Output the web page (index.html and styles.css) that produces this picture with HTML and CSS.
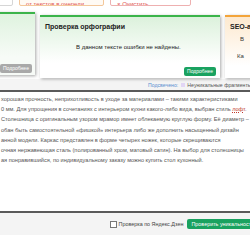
FILE: index.html
```html
<!DOCTYPE html>
<html lang="ru">
<head>
  <meta charset="UTF-8">
  <meta name="viewport" content="width=device-width, initial-scale=1.0">
  <title>Проверка уникальности</title>
  <link rel="stylesheet" href="styles.css">
</head>
<body>
  <div class="page">
    <div class="top-buttons">
      <div class="top-btn top-btn-plain"></div>
      <div class="top-btn top-btn-queue">от текстов в очереди</div>
      <div class="top-btn top-btn-clear">× Очистить</div>
    </div>

    <div class="cards">
      <div class="card card-side">
        <div class="card-body"></div>
        <div class="card-foot"><span class="btn-more btn-grey">Подробнее</span></div>
      </div>
      <div class="card card-main">
        <div class="card-title">Проверка орфографии</div>
        <div class="card-body card-center">В данном тексте ошибки не найдены.</div>
        <div class="card-foot card-foot-right"><span class="btn-more btn-green">Подробнее</span></div>
      </div>
      <div class="card card-seo">
        <div class="card-title">SEO-анализ</div>
        <div class="card-line">В</div>
        <div class="card-line card-line-low">Ка</div>
      </div>
    </div>

    <div class="legend">
      <span class="legend-label">Подсвечено:</span>
      <span class="legend-mark"></span>
      <span>Неуникальные фрагменты</span>
    </div>

    <div class="text-area">
      <p>хорошая прочность, неприхотливость в уходе за материалами – такими характеристиками</p>
      <p>0 мм. Для упрощения в сочетаниях с интерьером кухни какого-либо вида, выбран стиль <span class="typo">лофт</span>.</p>
      <p>Столешница с оригинальным узором мрамор имеет облекаемую круглую форму. Её диаметр –</p>
      <p>обан быть самостоятельной «фишкой» интерьера либо же дополнить насыщенный дизайн</p>
      <p>анной модели. Каркас представлен в форме четырех ножек, которые скрещиваются</p>
      <p>очная нержавеющая сталь (полированный хром, матовый сатин). На выбор для столешницы</p>
      <p>ая понравившийся, по индивидуальному заказу можно купить стол кухонный.</p>
    </div>

    <div class="bottom-bar">
      <label class="check"><span class="check-box"></span>Проверка по Яндекс.Дзен</label>
      <span class="btn-check">Проверить уникальность</span>
    </div>
  </div>
</body>
</html>
```

FILE: styles.css
```css
body, html {
  margin: 0;
  padding: 0;
  width: 100%;
  height: 100%;
  overflow: hidden;
  background: #fff;
  font-family: 'Liberation Sans', Arial, sans-serif;
}

.page {
  width: 250px;
  overflow: hidden;
}

/* верхние кнопки */
.top-buttons {
  display: flex;
  gap: 6px;
  margin-top: -10px;
  height: 16px;
}

.top-btn {
  box-sizing: border-box;
  height: 16px;
  border-radius: 2px;
  font-size: 6px;
  line-height: 26px;
  color: #e0524f;
  white-space: nowrap;
  overflow: hidden;
  padding: 0 6px;
  flex-shrink: 0;
}

.top-btn-plain {
  width: 17px;
  margin-left: -4px;
  border: 1px solid #d6d6d6;
}

.top-btn-queue {
  width: 85px;
  border: 1px solid #f3c79a;
  background: #fffaf4;
}

.top-btn-clear {
  width: 81px;
  border: 1px solid #eeb0b0;
}

/* карточки */
.cards {
  display: flex;
  align-items: flex-start;
  gap: 5px;
  margin-top: 6px;
}

.card {
  box-sizing: border-box;
  display: flex;
  flex-direction: column;
  flex-shrink: 0;
  border-top: 2px solid #3bb44a;
  box-shadow: 1px 1px 3px rgba(0, 0, 0, 0.35);
}

.card-side {
  width: 40px;
  height: 63px;
  margin-left: -5px;
  background: linear-gradient(#dff3df, #f7fbf7 70%);
}

.card-main {
  width: 180px;
  height: 63px;
  margin-top: 3px;
  background: linear-gradient(#dcf1dc, #fff 75%);
}

.card-seo {
  width: 40px;
  height: 63px;
  margin-top: 3px;
  border-top-color: #f3a43a;
  background: linear-gradient(#fde9cf, #fff 80%);
}

.card-title {
  font-weight: bold;
  font-size: 7px;
  color: #222;
  padding: 6px 0 0 5px;
  white-space: nowrap;
}

.card-body {
  flex: 1;
}

.card-center {
  font-size: 6px;
  color: #222;
  padding-top: 14px;
  padding-left: 36px;
  white-space: nowrap;
}

.card-foot {
  display: flex;
  padding: 0 4px 2px 5px;
}

.card-foot-right {
  justify-content: flex-end;
}

.btn-more {
  font-size: 5px;
  line-height: 9px;
  padding: 0 3px;
  border-radius: 2px;
  color: #fff;
}

.btn-grey {
  background: #a9a9a9;
}

.btn-green {
  background: #1aa260;
}

.card-line {
  font-size: 6px;
  color: #333;
  padding: 6px 0 0 15px;
}

.card-line-low {
  padding: 11px 0 0 12px;
}

/* легенда */
.legend {
  display: flex;
  align-items: center;
  gap: 2px;
  height: 11px;
  margin-top: 1px;
  padding-left: 148px;
  background: #f4f4f4;
  font-size: 5.2px;
  color: #555;
  white-space: nowrap;
}

.legend-label {
  color: #5b8fd0;
  margin-right: 1px;
}

.legend-mark {
  width: 4px;
  height: 4px;
  flex-shrink: 0;
  background: #e2d6f5;
}

/* текст */
.text-area {
  border-top: 2px solid #5a5a5a;
  height: 117px;
  padding-top: 2px;
  font-size: 5.6px;
  color: #555;
}

.text-area p {
  margin: 0;
  padding-left: 1px;
  line-height: 10.2px;
  white-space: nowrap;
}

.typo {
  color: #c0392b;
  text-decoration: underline dotted #c0392b;
}

/* нижняя панель */
.bottom-bar {
  display: flex;
  align-items: center;
  justify-content: flex-end;
  gap: 4px;
  height: 22px;
  border-top: 2px solid #5a5a5a;
  background: #f4f4f4;
  font-size: 5.4px;
  color: #444;
  white-space: nowrap;
}

.check {
  display: flex;
  align-items: center;
  gap: 2px;
}

.check-box {
  width: 5px;
  height: 5px;
  border: 1px solid #777;
  background: #fff;
}

.btn-check {
  margin-right: -8px;
  padding: 0 4px;
  line-height: 10px;
  border-radius: 2px;
  background: #1aa260;
  color: #fff;
}
```
